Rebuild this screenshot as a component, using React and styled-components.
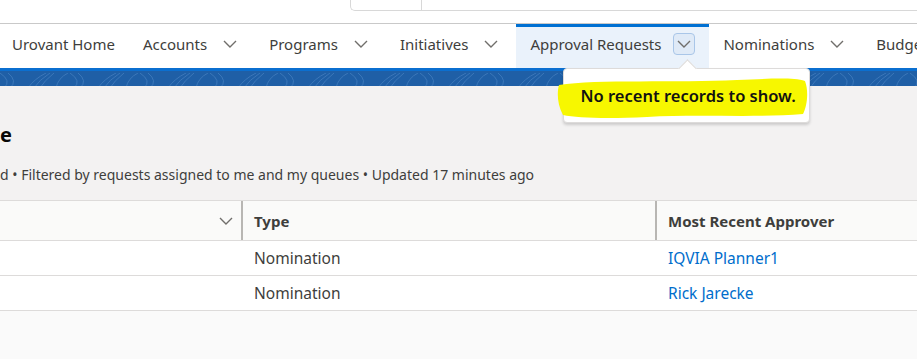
import React from "react";
import styled, { createGlobalStyle } from "styled-components";

const GlobalStyle = createGlobalStyle`
  html, body {
    margin: 0;
    padding: 0;
    background: #fafafa;
    font-family: "Noto Sans", "Open Sans", sans-serif;
    overflow: hidden;
  }
`;

const Page = styled.div`
  width: 917px;
  height: 359px;
  overflow: hidden;
  background: #fafafa;
`;

const TopBar = styled.div`
  height: 23px;
  background: #ffffff;
  border-bottom: 1px solid #c9c9c9;
  display: flex;
  align-items: flex-start;
  padding-left: 350px;
`;

const SearchBox = styled.div`
  flex: 1;
  height: 11px;
  margin-top: -1px;
  border: 1px solid #d8d8d8;
  border-top: none;
  border-right: none;
  border-radius: 0 0 0 5px;
  display: flex;
`;

const SearchScope = styled.div`
  width: 70px;
  border-right: 1px solid #d8d8d8;
`;

const Nav = styled.nav`
  height: 44px;
  background: #ffffff;
  display: flex;
  align-items: stretch;
  margin-left: -2px;
  white-space: nowrap;
  overflow: visible;
`;

const NavItem = styled.div`
  position: relative;
  display: flex;
  align-items: center;
  gap: 12px;
  padding: 0 14px 7px;
  font-size: 15px;
  color: #3e3e3c;
  background: ${({ active }) => (active ? "#eaf2fb" : "transparent")};
  border-top: 3px solid ${({ active }) => (active ? "#0070d2" : "transparent")};
`;

const ChevronBox = styled.span`
  display: inline-flex;
  align-items: center;
  justify-content: center;
  width: 22px;
  height: 22px;
  box-sizing: border-box;
  border: 1px solid ${({ boxed }) => (boxed ? "#a9c6e8" : "transparent")};
  border-radius: 4px;
  background: ${({ boxed }) => (boxed ? "#dfeaf7" : "transparent")};
`;

const Chevron = ({ color = "#706e6b" }) => (
  <svg width="14" height="8" viewBox="0 0 14 8">
    <polyline
      points="1,1 7,7 13,1"
      fill="none"
      stroke={color}
      strokeWidth="1.4"
    />
  </svg>
);

const Banner = styled.div`
  height: 15px;
  background: #1f5fa6;
  border-top: 3px solid #0b6fd0;
  overflow: hidden;
`;

const Content = styled.div`
  background: #f3f2f2;
  padding-top: 36px;
  height: 114px;
  box-sizing: border-box;
`;

const Title = styled.h1`
  margin: 0;
  font-size: 20px;
  font-weight: 700;
  color: #080707;
  line-height: 26px;
`;

const Meta = styled.div`
  margin-top: 17px;
  font-size: 14px;
  color: #3e3e3c;
  line-height: 20px;
`;

const Table = styled.div`
  border-top: 1px solid #dddbda;
`;

const Row = styled.div`
  display: grid;
  grid-template-columns: 243px 414px 1fr;
  height: ${({ head }) => (head ? "39px" : "34px")};
  background: ${({ head }) => (head ? "#fafaf9" : "#ffffff")};
  border-bottom: 1px solid #dddbda;
`;

const Cell = styled.div`
  display: flex;
  align-items: center;
  justify-content: ${({ end }) => (end ? "flex-end" : "flex-start")};
  padding: ${({ end }) => (end ? "0 10px 0 0" : "0 0 0 11px")};
  font-size: ${({ head }) => (head ? "15px" : "15.5px")};
  font-weight: ${({ head }) => (head ? 700 : 400)};
  color: ${({ link }) => (link ? "#006dcc" : "#3e3e3c")};
  border-left: ${({ divider }) => (divider ? "2px solid #b8b6b3" : "none")};
  margin-left: ${({ divider }) => (divider ? "-2px" : "0")};
`;

const Popover = styled.div`
  position: absolute;
  left: 47px;
  top: 41px;
  width: 247px;
  height: 55px;
  box-sizing: border-box;
  background: #ffffff;
  border: 1px solid #dddbda;
  border-radius: 4px;
  box-shadow: 0 2px 3px rgba(0, 0, 0, 0.16);
  display: flex;
  align-items: center;
  padding-left: 16px;
  z-index: 5;

  &::before {
    content: "";
    position: absolute;
    left: 117px;
    top: -7px;
    width: 12px;
    height: 12px;
    background: #ffffff;
    border-left: 1px solid #dddbda;
    border-top: 1px solid #dddbda;
    transform: rotate(45deg);
  }
`;

const Highlight = styled.svg`
  position: absolute;
  left: -7px;
  top: 9px;
  overflow: visible;
`;

const PopoverText = styled.span`
  position: relative;
  font-size: 16.5px;
  font-weight: 600;
  color: #111111;
`;

const tabs = [
  { label: "Urovant Home", menu: false },
  { label: "Accounts", menu: true },
  { label: "Programs", menu: true },
  { label: "Initiatives", menu: true },
  { label: "Approval Requests", menu: true, active: true },
  { label: "Nominations", menu: true },
  { label: "Budgets", menu: true },
];

const rows = [
  { type: "Nomination", approver: "IQVIA Planner1" },
  { type: "Nomination", approver: "Rick Jarecke" },
];

function BannerPattern() {
  const arcs = [];
  for (let i = 0; i < 14; i++) {
    const x = i * 70;
    arcs.push(
      <g key={i} stroke="#4f88c6" strokeWidth="1" fill="none" opacity="0.6">
        <path d={`M${x} 0 q12 8 4 15`} />
        <path d={`M${x + 8} 0 q10 8 2 15`} />
        <path d={`M${x + 28} 15 q6 -9 18 -15`} />
        <path d={`M${x + 34} 15 q5 -8 16 -15`} />
        <path d={`M${x + 40} 15 q4 -7 14 -15`} />
        <path d={`M${x + 56} 15 q2 -10 12 -15`} />
      </g>
    );
  }
  return (
    <svg width="917" height="15" viewBox="0 0 917 15">
      {arcs}
    </svg>
  );
}

export default function App() {
  return (
    <Page>
      <GlobalStyle />
      <TopBar>
        <SearchBox>
          <SearchScope />
        </SearchBox>
      </TopBar>
      <Nav>
        {tabs.map((t) => (
          <NavItem key={t.label} active={t.active}>
            {t.label}
            {t.menu && (
              <ChevronBox boxed={t.active}>
                <Chevron />
              </ChevronBox>
            )}
            {t.active && (
              <Popover>
                <Highlight width="252" height="40" viewBox="0 0 252 40">
                  <path
                    d="M2 7 C40 1 120 5 180 2 C210 1 235 -1 248 3 C252 14 250 28 246 36 C200 40 140 36 90 39 C50 41 20 40 6 37 C0 26 0 14 2 7 Z"
                    fill="#f7f700"
                  />
                </Highlight>
                <PopoverText>No recent records to show.</PopoverText>
              </Popover>
            )}
          </NavItem>
        ))}
      </Nav>
      <Banner>
        <BannerPattern />
      </Banner>
      <Content>
        <Title>e</Title>
        <Meta>
          d • Filtered by requests assigned to me and my queues • Updated 17
          minutes ago
        </Meta>
      </Content>
      <Table>
        <Row head>
          <Cell end>
            <Chevron />
          </Cell>
          <Cell head divider>
            Type
          </Cell>
          <Cell head divider>
            Most Recent Approver
          </Cell>
        </Row>
        {rows.map((r) => (
          <Row key={r.approver}>
            <Cell />
            <Cell>{r.type}</Cell>
            <Cell link>{r.approver}</Cell>
          </Row>
        ))}
      </Table>
    </Page>
  );
}
